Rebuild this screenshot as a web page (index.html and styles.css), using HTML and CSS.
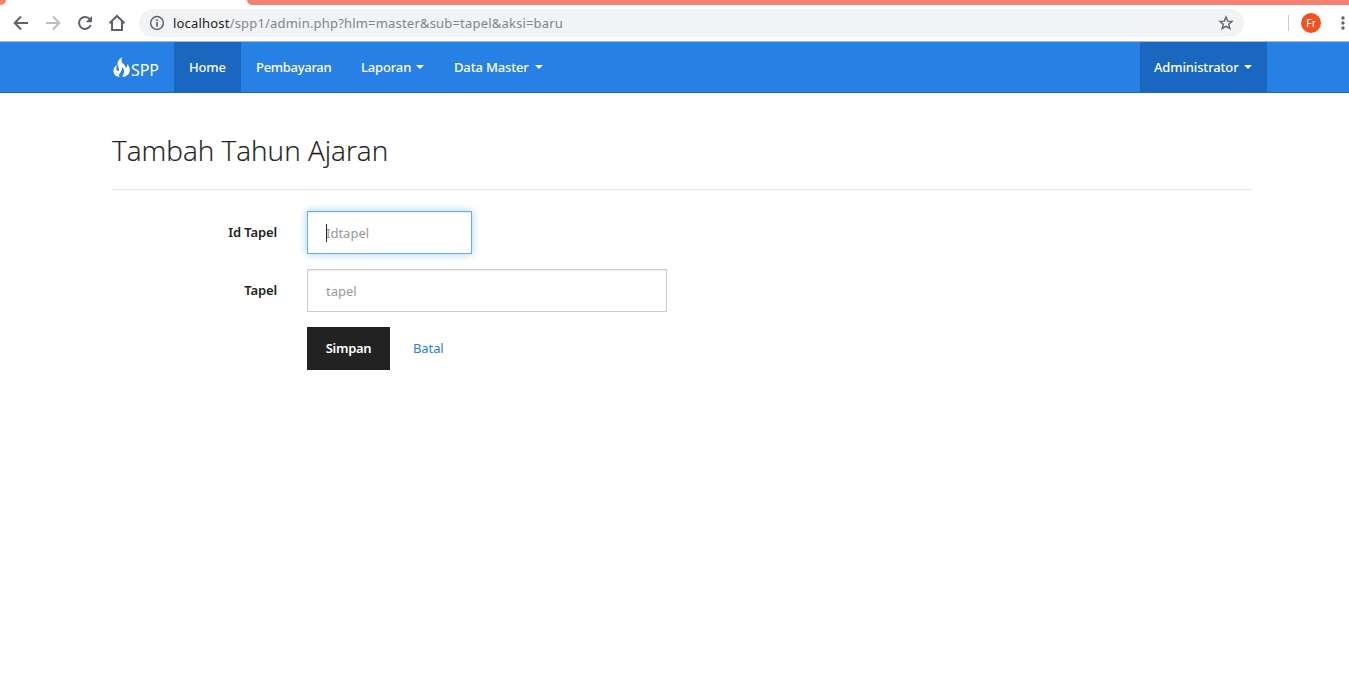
FILE: index.html
```html
<!DOCTYPE html>
<html lang="id">
<head>
<meta charset="utf-8">
<title>SPP</title>
<link rel="stylesheet" href="styles.css">
</head>
<body>
<div class="tabstrip"><i class="tab-left"></i><i class="tab-right"></i></div>
<div class="toolbar">
  <svg class="nav-icons" width="139" height="36" viewBox="0 5 139 36" fill="none" stroke="#5f6368" stroke-width="2">
    <path d="M28 23H15M21 16.5L14.7 23L21 29.5"/>
    <path stroke="#bdbebf" d="M46 23H59M53 16.5L59.3 23L53 29.5"/>
    <path d="M89.8 19.2A6 6 0 1 0 90.7 25"/><path fill="#5f6368" stroke="none" d="M92 16V22.3H85.7Z"/>
    <path d="M109.5 23.3L117 16L124.5 23.3M112 21.5V30H122V21.5"/>
  </svg>
  <div class="omnibox">
    <svg width="16" height="16" viewBox="0 0 16 16" fill="none" stroke="#5f6368"><circle cx="8" cy="8" r="6.4" stroke-width="1.5"/><path stroke-width="1.7" d="M8 7V11.7M8 4.3V5.9"/></svg>
    <span class="url"><b>localhost</b>/spp1/admin.php?hlm=master&amp;sub=tapel&amp;aksi=baru</span>
    <svg class="star" width="16" height="16" viewBox="0 0 16 16" fill="none" stroke="#5f6368" stroke-width="1.4"><path d="M8 2L9.7 6.1L14 6.4L10.7 9.2L11.8 13.6L8 11.3L4.2 13.6L5.3 9.2L2 6.4L6.3 6.1Z"/></svg>
  </div>
  <i class="divider"></i>
  <span class="avatar">Fr</span>
  <svg class="dots" width="8" height="16" viewBox="0 0 8 16" fill="#5f6368"><circle cx="4" cy="3" r="1.7"/><circle cx="4" cy="8" r="1.7"/><circle cx="4" cy="13" r="1.7"/></svg>
</div>
<nav class="navbar">
  <a class="brand"><svg width="19" height="21" viewBox="0 0 19 21" fill="#fff"><path d="M10.5 0C6 2.5 4.6 6 6.2 9.5C7.2 12 7.4 14 6.2 14.2C4.5 14.2 4.2 11.5 4.6 8C2 10 .8 12.5 1.6 15.6C2.4 18.4 4.6 19.8 7.5 20C6.3 17.8 7.4 16.8 8.8 15C10.2 13.2 10.2 11.5 9.8 10C12 11.5 12.5 13.5 12 15.5C11.6 17.3 10.3 18.2 10.5 20C14.5 19.6 17.4 17.3 17.8 13.7C18 11 16.5 9.4 15.9 7C14.8 8.3 15.2 9.6 14.4 10.8C13.2 10.8 13.6 8 10.4 6C9.2 4 9.3 2 10.5 0Z"/></svg><span>SPP</span></a>
  <a class="item home active"><span>Home</span></a>
  <a class="item pay"><span>Pembayaran</span></a>
  <a class="item report"><span>Laporan</span><i class="caret"></i></a>
  <a class="item data"><span>Data Master</span><i class="caret"></i></a>
  <a class="item admin active"><span>Administrator</span><i class="caret"></i></a>
</nav>
<main>
  <h2>Tambah Tahun Ajaran</h2>
  <form>
    <div class="row"><label>Id Tapel</label><div class="field short"><span class="placeholder">Idtapel</span><i class="cursor"></i></div></div>
    <div class="row"><label>Tapel</label><div class="field long"><span class="placeholder">tapel</span></div></div>
    <div class="row actions"><a class="button">Simpan</a><a class="cancel">Batal</a></div>
  </form>
</main>
</body>
</html>
```
FILE: styles.css
```css
* { box-sizing: border-box; }
body { margin: 0; height: 693px; overflow: hidden; background: #fff; font: 13px/19px "Noto Sans", "Open Sans", sans-serif; color: #222; }
.tabstrip { height: 5px; display: flex; justify-content: space-between; }
.tab-left { width: 6px; height: 5px; background: #f68074; border-bottom-right-radius: 6px; }
.tab-right { width: 1102px; height: 5px; background: #f68074; border-bottom-left-radius: 6px; }
.toolbar { height: 37px; display: flex; align-items: center; border-bottom: 1px solid #b2b4b8; overflow: hidden; }
.nav-icons { flex: none; }
.omnibox { width: 1105px; height: 28px; flex: none; border-radius: 14px; background: #f1f3f4; display: flex; align-items: center; padding: 0 10px; }
.url { font-size: 13px; letter-spacing: .19px; margin-left: 8px; color: #80868b; white-space: nowrap; }
.url b { font-weight: 400; color: #202124; }
.star { margin-left: auto; }
.divider { flex: none; width: 1px; height: 16px; background: #c8cacd; margin-left: 44px; }
.avatar { flex: none; width: 20px; height: 20px; border-radius: 50%; background: #f4511e; color: #fff; font: 11px/21px Roboto, sans-serif; text-align: center; margin-left: 12px; }
.dots { flex: none; margin-left: 18px; }
.navbar { height: 51px; display: flex; background: #2780e3; border-bottom: 1px solid #1967be; color: #fff; padding-left: 112px; }
.brand { width: 62px; display: flex; align-items: flex-start; padding-top: 15px; font-size: 16px; line-height: 26px; letter-spacing: -.1px; }
.brand svg { flex: none; }
.item { height: 50px; display: flex; align-items: center; padding-left: 15px; font-weight: 500; letter-spacing: -.15px; white-space: nowrap; }
.active { background: #1967be; }
.home { width: 67px; }
.pay { width: 105px; letter-spacing: -.3px; }
.report { width: 93px; }
.data { width: 119px; }
.admin { width: 127px; margin-left: 582px; padding-left: 14px; }
.caret { margin-left: auto; margin-right: 15px; border: 4px solid transparent; border-top-color: #fff; border-bottom: 0; }
main { padding: 41px 97px 0 112px; }
h2 { margin: 0; height: 56px; font: 300 28px/32px "Open Sans", "Noto Sans", sans-serif; border-bottom: 1px solid #e6e6e6; color: #222; -webkit-text-stroke: .2px #222; white-space: nowrap; }
form { padding-top: 21px; }
.row { height: 43px; margin-bottom: 15px; display: flex; }
label { width: 165px; margin-right: 30px; text-align: right; line-height: 43px; font-weight: 600; letter-spacing: -.12px; }
.field { position: relative; height: 43px; border: 1px solid #ccc; padding: 0 18px; line-height: 43px; color: #999; box-shadow: inset 0 1px 1px rgba(0,0,0,.075); }
.short { width: 165px; border-color: #66afe9; box-shadow: inset 0 1px 1px rgba(0,0,0,.075), 0 0 8px rgba(102,175,233,.6); }
.long { width: 360px; }
.cursor { position: absolute; left: 18px; top: 12px; width: 1px; height: 18px; background: #222; }
.actions { padding-left: 195px; line-height: 43px; }
.button { width: 83px; background: #222; color: #fff; text-align: center; font-weight: 600; letter-spacing: -.3px; }
.cancel { margin-left: 23px; color: #2780e3; letter-spacing: -.1px; }
```
